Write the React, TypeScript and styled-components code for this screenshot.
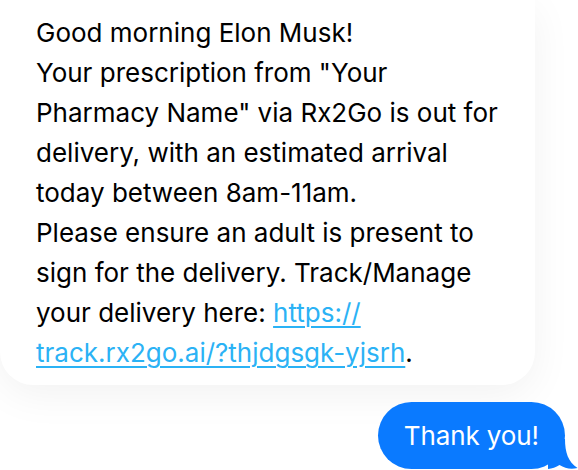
import React from "react";
import styled, { createGlobalStyle } from "styled-components";

const Global = createGlobalStyle`
  html, body {
    margin: 0;
    padding: 0;
    background: #ffffff;
    overflow: hidden;
  }
  body {
    font-family: Inter, "Noto Sans", "Liberation Sans", sans-serif;
    -webkit-font-smoothing: antialiased;
  }
`;

const Thread = styled.div`
  width: 578px;
  height: 470px;
  display: flex;
  flex-direction: column;
  align-items: flex-start;
  gap: 17px;
  overflow: hidden;
`;

const Received = styled.div`
  width: 535px;
  box-sizing: border-box;
  padding: 13px 16px 12px 36px;
  background: #ffffff;
  border-radius: 0 0 33px 33px;
  box-shadow: 0 10px 40px rgba(0, 0, 0, 0.055);
  font-size: 26px;
  line-height: 40px;
  color: #000000;
  white-space: nowrap;
`;

const Link = styled.a`
  color: #2bb2f5;
  text-decoration: underline;
  text-decoration-thickness: 2px;
  text-underline-offset: 4px;
`;

const Sent = styled.div`
  position: relative;
  align-self: flex-end;
  margin-right: 13px;
  height: 67px;
  box-sizing: border-box;
  padding: 0 26px;
  display: flex;
  align-items: center;
  background: #0a7aff;
  color: #ffffff;
  border-radius: 34px;
  font-size: 26px;
  letter-spacing: -0.1px;
`;

const Tail = styled.svg`
  position: absolute;
  right: -13px;
  bottom: 0;
  width: 30px;
  height: 30px;
`;

export default function App() {
  return (
    <>
      <Global />
      <Thread>
        <Received>
          Good morning Elon Musk!
          <br />
          Your prescription from "Your
          <br />
          Pharmacy Name" via Rx2Go is out for
          <br />
          delivery, with an estimated arrival
          <br />
          today between 8am-11am.
          <br />
          Please ensure an adult is present to
          <br />
          sign for the delivery. Track/Manage
          <br />
          your delivery here: <Link href="#">https://</Link>
          <br />
          <Link href="#">track.rx2go.ai/?thjdgsgk-yjsrh</Link>.
        </Received>
        <Sent>
          Thank you!
          <Tail viewBox="0 0 30 30" aria-hidden="true">
            <path
              d="M 10 0 L 17 0 C 17 13 20 23 29.5 29 C 23 30.5 17 29.5 11.5 26 C 8 28.5 4 29.6 0 30 L 0 0 Z"
              fill="#0a7aff"
            />
          </Tail>
        </Sent>
      </Thread>
    </>
  );
}
